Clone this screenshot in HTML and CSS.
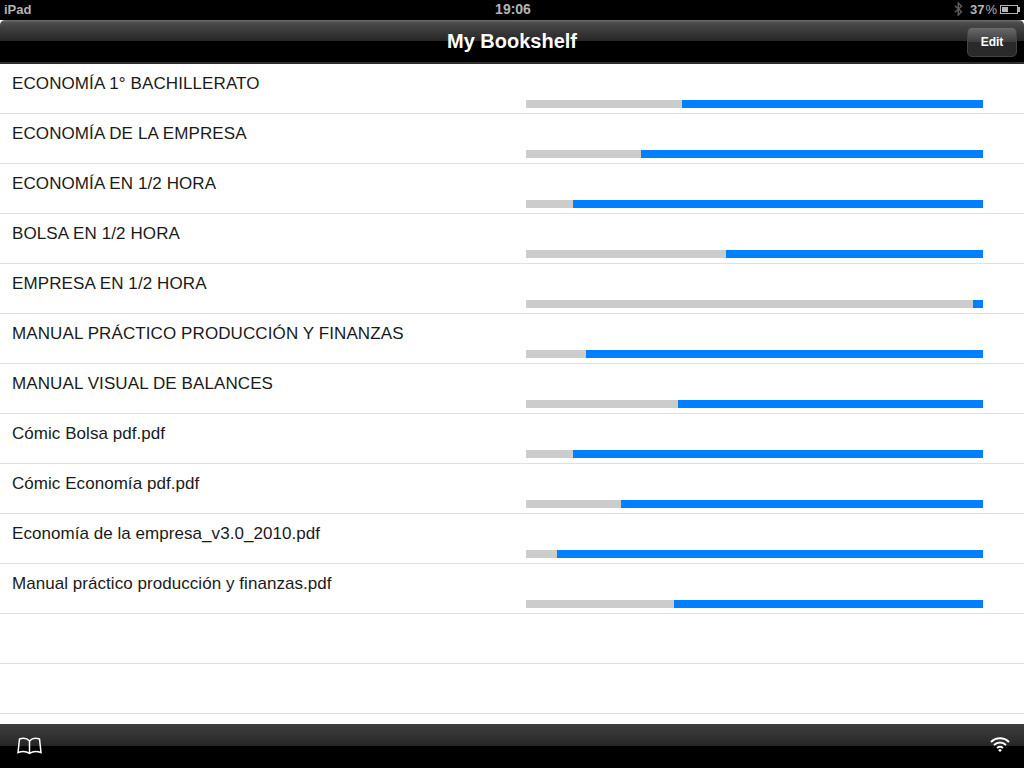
FILE: index.html

```html
<!DOCTYPE html>
<html lang="en">
<head>
    <meta charset="UTF-8">
    <meta name="viewport" content="width=device-width, initial-scale=1.0">
    <title>My Bookshelf</title>
    <link rel="stylesheet" href="styles.css">
</head>
<body>
    <div class="statusBar">
        <span class="device">iPad</span>
        <span class="clock">19:06</span>
        <div class="statusRight">
            <svg class="bluetooth" width="9" height="14" viewBox="0 0 9 14">
                <path d="M1 3.8 L7.5 9.8 L4.3 13 L4.3 1 L7.5 4.2 L1 10.2" fill="none" stroke="#5c5c5c" stroke-width="1.5"/>
            </svg>
            <span class="battery">37<span class="percent">%</span></span>
            <div class="batteryIcon"><div class="batteryLevel"></div></div>
        </div>
    </div>

    <div class="navBar">
        <h1>My Bookshelf</h1>
        <button class="editButton">Edit</button>
    </div>

    <div class="shelf">
        <div class="book">
            <div class="bookTitle">ECONOMÍA 1° BACHILLERATO</div>
            <div class="bar"><div class="barUsed" style="width: 156px"></div><div class="barFree"></div></div>
        </div>
        <div class="book">
            <div class="bookTitle">ECONOMÍA DE LA EMPRESA</div>
            <div class="bar"><div class="barUsed" style="width: 115px"></div><div class="barFree"></div></div>
        </div>
        <div class="book">
            <div class="bookTitle">ECONOMÍA EN 1/2 HORA</div>
            <div class="bar"><div class="barUsed" style="width: 47px"></div><div class="barFree"></div></div>
        </div>
        <div class="book">
            <div class="bookTitle">BOLSA EN 1/2 HORA</div>
            <div class="bar"><div class="barUsed" style="width: 200px"></div><div class="barFree"></div></div>
        </div>
        <div class="book">
            <div class="bookTitle">EMPRESA EN 1/2 HORA</div>
            <div class="bar"><div class="barUsed" style="width: 447px"></div><div class="barFree"></div></div>
        </div>
        <div class="book">
            <div class="bookTitle">MANUAL PRÁCTICO PRODUCCIÓN Y FINANZAS</div>
            <div class="bar"><div class="barUsed" style="width: 60px"></div><div class="barFree"></div></div>
        </div>
        <div class="book">
            <div class="bookTitle">MANUAL VISUAL DE BALANCES</div>
            <div class="bar"><div class="barUsed" style="width: 152px"></div><div class="barFree"></div></div>
        </div>
        <div class="book">
            <div class="bookTitle fileName">Cómic Bolsa pdf.pdf</div>
            <div class="bar"><div class="barUsed" style="width: 47px"></div><div class="barFree"></div></div>
        </div>
        <div class="book">
            <div class="bookTitle fileName">Cómic Economía pdf.pdf</div>
            <div class="bar"><div class="barUsed" style="width: 95px"></div><div class="barFree"></div></div>
        </div>
        <div class="book">
            <div class="bookTitle fileName">Economía de la empresa_v3.0_2010.pdf</div>
            <div class="bar"><div class="barUsed" style="width: 31px"></div><div class="barFree"></div></div>
        </div>
        <div class="book">
            <div class="bookTitle fileName">Manual práctico producción y finanzas.pdf</div>
            <div class="bar"><div class="barUsed" style="width: 148px"></div><div class="barFree"></div></div>
        </div>
        <div class="book"></div>
        <div class="book"></div>
    </div>

    <div class="toolBar">
        <svg width="25" height="18" viewBox="0 0 25 18">
            <path d="M12.5 4 C10 1.2 6 0.8 2.5 2 L1 15.5 C5 14 9.5 14.2 12.5 16.5 C15.5 14.2 20 14 24 15.5 L22.5 2 C19 0.8 15 1.2 12.5 4 Z M12.5 4 L12.5 16.5" fill="none" stroke="#fff" stroke-width="1.5"/>
        </svg>
        <svg class="wifi" width="20" height="16" viewBox="0 0 20 16">
            <path d="M1 6 C6 1 14 1 19 6" fill="none" stroke="#fff" stroke-width="2"/>
            <path d="M4 9 C7.5 5.8 12.5 5.8 16 9" fill="none" stroke="#fff" stroke-width="2"/>
            <path d="M7 12 C8.8 10.5 11.2 10.5 13 12" fill="none" stroke="#fff" stroke-width="1.8"/>
            <circle cx="10" cy="14.3" r="1.4" fill="#fff"/>
        </svg>
    </div>
</body>
</html>
```

FILE: styles.css

```css
body {
    font-family: "Liberation Sans", Arial, sans-serif;
    margin: 0;
    height: 768px;
    overflow: hidden;
    display: flex;
    flex-direction: column;
    background-color: white;
}

.statusBar {
    height: 20px;
    flex-shrink: 0;
    background-color: black;
    color: #b4b4b4;
    font-size: 13px;
    font-weight: bold;
    display: grid;
    grid-template-columns: 1fr auto 1fr;
    align-items: center;
    padding: 0 3px 2px 4px;
    box-sizing: border-box;
}

.clock {
    font-size: 14px;
    margin-left: 1px;
}

.statusRight {
    display: flex;
    justify-content: flex-end;
    align-items: center;
    gap: 3px;
}

.bluetooth {
    margin-right: 4px;
}

.battery {
    font-size: 13px;
}

.percent {
    font-weight: normal;
    margin-left: 1px;
}

.batteryIcon {
    width: 18px;
    height: 9px;
    margin-right: 3px;
    border: 1px solid #b4b4b4;
    padding: 1px;
    box-sizing: border-box;
    position: relative;
}

.batteryIcon::after {
    content: "";
    position: absolute;
    right: -3px;
    top: 1px;
    width: 2px;
    height: 5px;
    background-color: #b4b4b4;
}

.batteryLevel {
    width: 40%;
    height: 100%;
    background-color: #b4b4b4;
}

.navBar {
    height: 44px;
    flex-shrink: 0;
    box-sizing: border-box;
    background: linear-gradient(#707070, #4a4a4a 3px, #262626 50%, black 50%);
    border-radius: 5px 5px 0 0;
    border-bottom: 2px solid #2e2e2e;
    display: flex;
    align-items: center;
    justify-content: center;
    position: relative;
}

.navBar h1 {
    margin: 0;
    color: white;
    font-size: 20px;
    font-weight: bold;
}

.editButton {
    position: absolute;
    right: 7px;
    top: 7px;
    width: 50px;
    height: 30px;
    border: 1px solid #444;
    border-radius: 5px;
    background: linear-gradient(#6a6a6a, #3c3c3c 50%, #2a2a2a 50%, #2a2a2a);
    color: white;
    font-family: inherit;
    font-size: 12px;
    font-weight: bold;
    padding: 0;
}

.shelf {
    flex: 1;
    overflow: hidden;
}

.book {
    height: 50px;
    box-sizing: border-box;
    border-bottom: 1px solid #e0e0e0;
    position: relative;
    padding: 10px 12px 0;
}

.bookTitle {
    font-size: 17px;
    line-height: 20px;
    letter-spacing: 0.1px;
    color: #1a1a1a;
}

.fileName {
    letter-spacing: 0.05px;
}

.bar {
    position: absolute;
    left: 526px;
    top: 36px;
    width: 457px;
    height: 8px;
    display: flex;
}

.barUsed {
    background-color: #cccccc;
}

.barFree {
    flex: 1;
    background-color: #007fff;
}

.toolBar {
    height: 44px;
    flex-shrink: 0;
    box-sizing: border-box;
    background: linear-gradient(#3e3e3e, #262626 50%, black 50%);
    display: flex;
    justify-content: space-between;
    align-items: flex-end;
    padding: 0 14px 13px 17px;
}

.wifi {
    margin-bottom: 3px;
}
```
